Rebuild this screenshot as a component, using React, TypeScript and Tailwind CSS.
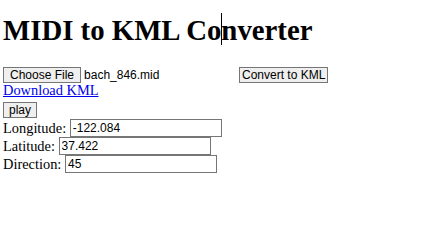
import React from "react";

function NativeButton({ label, className = "" }: { label: string; className?: string }) {
  return (
    <button
      type="button"
      className={
        "flex h-[16px] items-center border border-[#767676] bg-[#efefef] font-['Liberation_Sans',Arial,sans-serif] text-[12px] leading-[14px] text-black " +
        className
      }
    >
      {label}
    </button>
  );
}

function Field({ label, value }: { label: string; value: string }) {
  return (
    <div className="flex h-[18px] items-center whitespace-nowrap">
      <span className="leading-[18px]">{label}&nbsp;</span>
      <input
        type="text"
        defaultValue={value}
        className="h-[18px] w-[152px] border border-[#767676] bg-white px-[2px] font-['Liberation_Sans',Arial,sans-serif] text-[12px] text-black outline-none"
      />
    </div>
  );
}

export default function App() {
  return (
    <div className="relative min-h-[243px] bg-white px-[3px] font-['Liberation_Serif','Times_New_Roman',serif] text-[14.4px] text-black">
      <h1 className="mt-0 pt-[14px] text-[28.8px] font-bold leading-[32px] whitespace-nowrap">
        MIDI to KML Converter
      </h1>
      {/* text caret sitting in the heading */}
      <div className="absolute left-[221px] top-[13px] h-[32px] w-px bg-black" />

      <div className="mt-[21px] flex h-[16px] items-center">
        <div className="flex w-[236px] items-center">
          <NativeButton label="Choose File" className="px-[6px]" />
          <span className="ml-[3px] font-['Liberation_Sans',Arial,sans-serif] text-[12px]">bach_846.mid</span>
        </div>
        <NativeButton label="Convert to KML" className="px-[2px]" />
      </div>

      <div className="-mt-px h-[19px] leading-[17px]">
        <a href="#" className="text-[#0000ee] underline">
          Download KML
        </a>
      </div>

      <div className="flex h-[18px] items-center">
        <NativeButton label="play" className="h-[15px] px-[5px]" />
      </div>

      <Field label="Longitude:" value="-122.084" />
      <Field label="Latitude:" value="37.422" />
      <Field label="Direction:" value="45" />
    </div>
  );
}
